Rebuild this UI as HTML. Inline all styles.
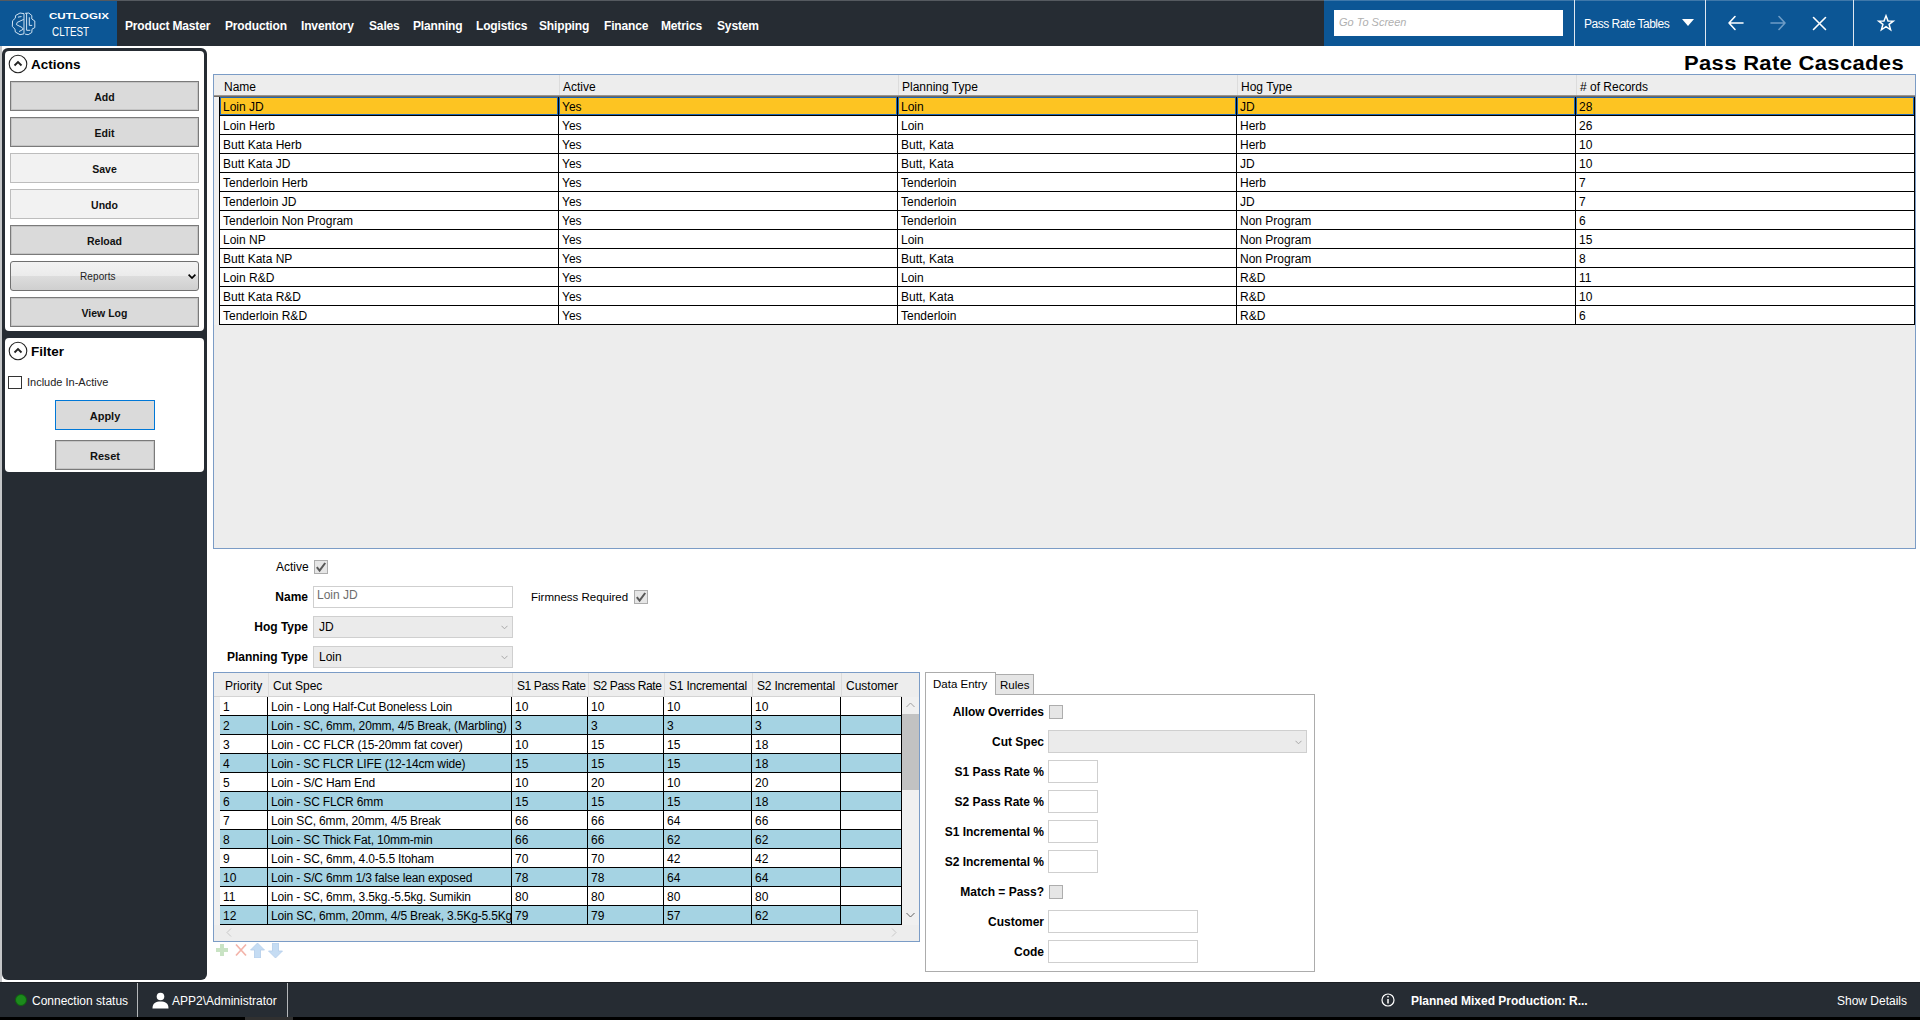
<!DOCTYPE html><html><head><meta charset='utf-8'><style>
*{box-sizing:border-box;margin:0;padding:0}
html,body{width:1920px;height:1020px;overflow:hidden;background:#fff;font-family:'Liberation Sans', sans-serif;color:#000}
.a{position:absolute}
.t{position:absolute;white-space:nowrap;line-height:1}
.nav{position:absolute;top:18px;color:#fff;font-weight:bold;font-size:12px;letter-spacing:-0.15px;white-space:nowrap;line-height:16px}
.btn{position:absolute;left:10px;width:189px;height:30px;background:#dadada;border:1px solid #7a7a7a;box-shadow:inset 0 0 0 1px #c4c4c4;font-weight:bold;font-size:10.5px;text-align:center;line-height:28px;padding-top:1px;color:#111}
.btn.dis{background:#f2f2f2;border-color:#bdbdbd;box-shadow:none}
.grid{position:absolute;border:1px solid #7b9cc6;background:#ededed;overflow:hidden}
table{border-collapse:collapse;table-layout:fixed}
td{font-size:12px;white-space:nowrap;overflow:hidden;padding:0 0 0 3px;height:19px;line-height:18px;border-right:1px solid #000;border-bottom:1px solid #000;vertical-align:top}
.hd{position:absolute;font-size:12px;white-space:nowrap;line-height:1}
.lbl{position:absolute;font-size:12px;font-weight:bold;white-space:nowrap;text-align:right;line-height:14px}
.inp{position:absolute;background:#fff;border:1px solid #cfcfcf}
.sel{position:absolute;background:#ebebeb;border:1px solid #cfcfcf;font-size:12px;line-height:20px;padding-left:5px}
.cell{position:absolute;height:19px;border-right:1px solid #000;border-bottom:1px solid #000;padding-left:3px;padding-top:1px;font-size:12px;line-height:18px;overflow:hidden;white-space:nowrap;background:#fff}
.selb{position:absolute;left:0;top:0;right:0;bottom:0;border:1px solid #1f66b3}
.cb{position:absolute;width:14px;height:14px;background:#e6e6e6;border:1px solid #adadad}
</style></head><body>
<div class='a' style='left:0;top:0;width:1920px;height:46px;background:#262c33'></div>
<div class='a' style='left:0;top:0;width:1920px;height:1px;background:#555a60'></div>
<div class='a' style='left:0;top:1px;width:117px;height:45px;background:#0c5695'></div>
<svg class='a' style='left:9px;top:10px' width='30' height='28' viewBox='0 0 30 28' fill='none' stroke='#cfe2f2' stroke-width='1' stroke-linejoin='round' stroke-linecap='round'>
<path d='M14.6 3.6 L11 3 L6.6 5.5 L6.3 8.2 L3.6 10.7 L3.3 16.5 L6 19.2 L6.3 22 L11 24.7 L14.6 23.9 Z'/>
<path d='M16.5 3.3 L19.8 3 L22.8 5.5 L22.8 9 L25.8 11 L25.8 17.6 L23 19.2 L22.8 22.5 L19.2 24.7 L16.5 24.2'/>
<path d='M17.6 3.6 L17.6 20.3 L20.9 20.3'/>
<path d='M20.3 7.7 L20.3 15.4 L22.8 15.4'/>
<path d='M14.3 9.6 L8.2 12.4 L7.4 14.6 L13.2 17.6 L14.3 19.2 L10.4 21.4'/>
<path d='M9.3 7.1 L12.1 6.6'/>
</svg>
<div class='t' style='left:49px;top:11px;color:#fff;font-weight:bold;font-size:9.5px;transform:scaleX(1.22);transform-origin:left top'>CUTLOGIX</div>
<div class='t' style='left:52px;top:26px;color:#fff;font-size:12.5px;transform:scaleX(0.79);transform-origin:left top'>CLTEST</div>
<div class='nav' style='left:125px'>Product Master</div>
<div class='nav' style='left:225px'>Production</div>
<div class='nav' style='left:301px'>Inventory</div>
<div class='nav' style='left:369px'>Sales</div>
<div class='nav' style='left:413px'>Planning</div>
<div class='nav' style='left:476px'>Logistics</div>
<div class='nav' style='left:539px'>Shipping</div>
<div class='nav' style='left:604px'>Finance</div>
<div class='nav' style='left:661px'>Metrics</div>
<div class='nav' style='left:717px'>System</div>
<div class='a' style='left:1324px;top:1px;width:596px;height:45px;background:#0c5695'></div>
<div class='a' style='left:1324px;top:0;width:596px;height:1px;background:#3f78aa'></div>
<div class='a' style='left:1334px;top:10px;width:229px;height:26px;background:#fff'></div>
<div class='t' style='left:1339px;top:17px;font-size:11px;font-style:italic;color:#b0b0b0'>Go To Screen</div>
<div class='a' style='left:1574px;top:0;width:1px;height:46px;background:#dfe7f0'></div>
<div class='a' style='left:1705px;top:0;width:1px;height:46px;background:#dfe7f0'></div>
<div class='a' style='left:1853px;top:0;width:1px;height:46px;background:#dfe7f0'></div>
<div class='t' style='left:1584px;top:18px;font-size:12px;letter-spacing:-0.5px;color:#fff'>Pass Rate Tables</div>
<svg class='a' style='left:1682px;top:19px' width='12' height='8'><path d='M0 0 L12 0 L6 7Z' fill='#fff'/></svg>
<svg class='a' style='left:1726px;top:13px' width='20' height='20' viewBox='0 0 20 20' fill='none' stroke='#fff' stroke-width='1.6' stroke-linecap='round'>
<path d='M3 10 L17 10 M3 10 L9 3.5 M3 10 L9 16.5'/></svg>
<svg class='a' style='left:1768px;top:13px' width='20' height='20' viewBox='0 0 20 20' fill='none' stroke='#6e9cc6' stroke-width='1.6' stroke-linecap='round'>
<path d='M3 10 L17 10 M17 10 L11 3.5 M17 10 L11 16.5'/></svg>
<svg class='a' style='left:1810px;top:14px' width='20' height='20' viewBox='0 0 20 20' fill='none' stroke='#fff' stroke-width='1.6' stroke-linecap='round'>
<path d='M3.5 3.5 L15.5 15.5 M15.5 3.5 L3.5 15.5'/></svg>
<svg class='a' style='left:1876px;top:13px' width='20' height='20' viewBox='0 0 20 20' fill='none' stroke='#fff' stroke-width='1.5' stroke-linejoin='miter'>
<path d='M10 2.8 L12 7.9 L17.3 8.1 L13.1 11.4 L14.6 16.8 L10 13.7 L5.4 16.8 L6.9 11.4 L2.7 8.1 L8 7.9Z'/></svg>
<div class='t' style='left:1684px;top:53px;font-size:20px;font-weight:bold;letter-spacing:0.3px;transform:scaleX(1.1);transform-origin:left top'>Pass Rate Cascades</div>
<div class='a' style='left:0;top:46px;width:2px;height:936px;background:#c4c6c8'></div>
<div class='a' style='left:2px;top:48px;width:205px;height:932px;background:#262c33;border-radius:6px'></div>
<div class='a' style='left:5px;top:51px;width:199px;height:280px;background:#fff;border-radius:4px'></div>
<div class='a' style='left:5px;top:338px;width:199px;height:134px;background:#fff;border-radius:4px'></div>
<svg class='a' style='left:8px;top:54px' width='20' height='20' viewBox='0 0 20 20' fill='none' stroke='#222'>
<circle cx='10' cy='10' r='8.8' stroke-width='1.1'/><path d='M6.5 11.5 L10 8 L13.5 11.5' stroke-width='1.8'/></svg>
<div class='t' style='left:31px;top:58px;font-size:13.5px;font-weight:bold'>Actions</div>
<div class='btn' style='top:81px'>Add</div>
<div class='btn' style='top:117px'>Edit</div>
<div class='btn dis' style='top:153px'>Save</div>
<div class='btn dis' style='top:189px'>Undo</div>
<div class='btn' style='top:225px'>Reload</div>
<div class='a' style='left:10px;top:261px;width:189px;height:30px;border:1px solid #707070;border-radius:3px;background:linear-gradient(#f3f3f3 0%,#ebebeb 50%,#dddddd 50%,#cfcfcf 100%)'></div>
<div class='t' style='left:80px;top:272px;font-size:10px;letter-spacing:0.1px;color:#222'>Reports</div>
<svg class='a' style='left:188px;top:274px' width='8' height='5'><path d='M0.6 0.6 L4 4 L7.4 0.6' fill='none' stroke='#000' stroke-width='1.7'/></svg>
<div class='btn' style='top:297px'>View Log</div>
<svg class='a' style='left:8px;top:341px' width='20' height='20' viewBox='0 0 20 20' fill='none' stroke='#222'>
<circle cx='10' cy='10' r='8.8' stroke-width='1.1'/><path d='M6.5 11.5 L10 8 L13.5 11.5' stroke-width='1.8'/></svg>
<div class='t' style='left:31px;top:345px;font-size:13.5px;font-weight:bold'>Filter</div>
<div class='a' style='left:8px;top:376px;width:14px;height:13px;border:1px solid #333;background:#fff'></div>
<div class='t' style='left:27px;top:377px;font-size:11px;color:#222'>Include In-Active</div>
<div class='btn' style='left:55px;top:400px;width:100px;height:30px;border:1px solid #0078d7;box-shadow:none;font-size:11px'>Apply</div>
<div class='btn' style='left:55px;top:440px;width:100px;height:30px;font-size:11px'>Reset</div>
<div class='grid' style='left:213px;top:74px;width:1703px;height:475px'></div>
<div class='a' style='left:214px;top:75px;width:1701px;height:20px;background:#ededed'></div>
<div class='a' style='left:214px;top:95px;width:1701px;height:1px;background:#9b9690'></div>
<div class='a' style='left:214px;top:96px;width:1701px;height:1px;background:#6f6a66'></div>
<div class='hd' style='left:224px;top:81px'>Name</div>
<div class='hd' style='left:563px;top:81px'>Active</div>
<div class='a' style='left:559px;top:75px;width:1px;height:20px;background:#dcdcdc'></div>
<div class='hd' style='left:902px;top:81px'>Planning Type</div>
<div class='a' style='left:898px;top:75px;width:1px;height:20px;background:#dcdcdc'></div>
<div class='hd' style='left:1241px;top:81px'>Hog Type</div>
<div class='a' style='left:1237px;top:75px;width:1px;height:20px;background:#dcdcdc'></div>
<div class='hd' style='left:1580px;top:81px'># of Records</div>
<div class='a' style='left:1576px;top:75px;width:1px;height:20px;background:#dcdcdc'></div>
<div class='a' style='left:214px;top:97px;width:5px;height:228px;background:#f0f0f0'></div>
<div class='cell' style='left:219px;top:97px;width:340px;border-left:1px solid #000;background:#fdc422'><div class='selb'></div>Loin JD</div>
<div class='cell' style='left:559px;top:97px;width:339px;background:#fdc422'><div class='selb'></div>Yes</div>
<div class='cell' style='left:898px;top:97px;width:339px;background:#fdc422'><div class='selb'></div>Loin</div>
<div class='cell' style='left:1237px;top:97px;width:339px;background:#fdc422'><div class='selb'></div>JD</div>
<div class='cell' style='left:1576px;top:97px;width:339px;background:#fdc422'><div class='selb'></div>28</div>
<div class='cell' style='left:219px;top:116px;width:340px;border-left:1px solid #000;'>Loin Herb</div>
<div class='cell' style='left:559px;top:116px;width:339px;'>Yes</div>
<div class='cell' style='left:898px;top:116px;width:339px;'>Loin</div>
<div class='cell' style='left:1237px;top:116px;width:339px;'>Herb</div>
<div class='cell' style='left:1576px;top:116px;width:339px;'>26</div>
<div class='cell' style='left:219px;top:135px;width:340px;border-left:1px solid #000;'>Butt Kata Herb</div>
<div class='cell' style='left:559px;top:135px;width:339px;'>Yes</div>
<div class='cell' style='left:898px;top:135px;width:339px;'>Butt, Kata</div>
<div class='cell' style='left:1237px;top:135px;width:339px;'>Herb</div>
<div class='cell' style='left:1576px;top:135px;width:339px;'>10</div>
<div class='cell' style='left:219px;top:154px;width:340px;border-left:1px solid #000;'>Butt Kata JD</div>
<div class='cell' style='left:559px;top:154px;width:339px;'>Yes</div>
<div class='cell' style='left:898px;top:154px;width:339px;'>Butt, Kata</div>
<div class='cell' style='left:1237px;top:154px;width:339px;'>JD</div>
<div class='cell' style='left:1576px;top:154px;width:339px;'>10</div>
<div class='cell' style='left:219px;top:173px;width:340px;border-left:1px solid #000;'>Tenderloin Herb</div>
<div class='cell' style='left:559px;top:173px;width:339px;'>Yes</div>
<div class='cell' style='left:898px;top:173px;width:339px;'>Tenderloin</div>
<div class='cell' style='left:1237px;top:173px;width:339px;'>Herb</div>
<div class='cell' style='left:1576px;top:173px;width:339px;'>7</div>
<div class='cell' style='left:219px;top:192px;width:340px;border-left:1px solid #000;'>Tenderloin JD</div>
<div class='cell' style='left:559px;top:192px;width:339px;'>Yes</div>
<div class='cell' style='left:898px;top:192px;width:339px;'>Tenderloin</div>
<div class='cell' style='left:1237px;top:192px;width:339px;'>JD</div>
<div class='cell' style='left:1576px;top:192px;width:339px;'>7</div>
<div class='cell' style='left:219px;top:211px;width:340px;border-left:1px solid #000;'>Tenderloin Non Program</div>
<div class='cell' style='left:559px;top:211px;width:339px;'>Yes</div>
<div class='cell' style='left:898px;top:211px;width:339px;'>Tenderloin</div>
<div class='cell' style='left:1237px;top:211px;width:339px;'>Non Program</div>
<div class='cell' style='left:1576px;top:211px;width:339px;'>6</div>
<div class='cell' style='left:219px;top:230px;width:340px;border-left:1px solid #000;'>Loin NP</div>
<div class='cell' style='left:559px;top:230px;width:339px;'>Yes</div>
<div class='cell' style='left:898px;top:230px;width:339px;'>Loin</div>
<div class='cell' style='left:1237px;top:230px;width:339px;'>Non Program</div>
<div class='cell' style='left:1576px;top:230px;width:339px;'>15</div>
<div class='cell' style='left:219px;top:249px;width:340px;border-left:1px solid #000;'>Butt Kata NP</div>
<div class='cell' style='left:559px;top:249px;width:339px;'>Yes</div>
<div class='cell' style='left:898px;top:249px;width:339px;'>Butt, Kata</div>
<div class='cell' style='left:1237px;top:249px;width:339px;'>Non Program</div>
<div class='cell' style='left:1576px;top:249px;width:339px;'>8</div>
<div class='cell' style='left:219px;top:268px;width:340px;border-left:1px solid #000;'>Loin R&amp;D</div>
<div class='cell' style='left:559px;top:268px;width:339px;'>Yes</div>
<div class='cell' style='left:898px;top:268px;width:339px;'>Loin</div>
<div class='cell' style='left:1237px;top:268px;width:339px;'>R&amp;D</div>
<div class='cell' style='left:1576px;top:268px;width:339px;'>11</div>
<div class='cell' style='left:219px;top:287px;width:340px;border-left:1px solid #000;'>Butt Kata R&amp;D</div>
<div class='cell' style='left:559px;top:287px;width:339px;'>Yes</div>
<div class='cell' style='left:898px;top:287px;width:339px;'>Butt, Kata</div>
<div class='cell' style='left:1237px;top:287px;width:339px;'>R&amp;D</div>
<div class='cell' style='left:1576px;top:287px;width:339px;'>10</div>
<div class='cell' style='left:219px;top:306px;width:340px;border-left:1px solid #000;'>Tenderloin R&amp;D</div>
<div class='cell' style='left:559px;top:306px;width:339px;'>Yes</div>
<div class='cell' style='left:898px;top:306px;width:339px;'>Tenderloin</div>
<div class='cell' style='left:1237px;top:306px;width:339px;'>R&amp;D</div>
<div class='cell' style='left:1576px;top:306px;width:339px;'>6</div>
<div class='t' style='left:276px;top:561px;font-size:12px'>Active</div>
<div class='cb' style='left:314px;top:560px;width:14px;height:14px'></div><svg class='a' style='left:314px;top:560px' width='14' height='14' viewBox='0 0 14 14'><path d='M2.8 7.2 L5.6 10.6 L11.2 3' fill='none' stroke='#585858' stroke-width='2'/></svg>
<div class='lbl' style='left:200px;width:108px;top:590px'>Name</div>
<div class='inp' style='left:313px;top:586px;width:200px;height:22px'></div>
<div class='t' style='left:317px;top:589px;font-size:12px;color:#6d6d6d'>Loin JD</div>
<div class='t' style='left:531px;top:592px;font-size:11.5px'>Firmness Required</div>
<div class='cb' style='left:634px;top:590px;width:14px;height:14px'></div><svg class='a' style='left:634px;top:590px' width='14' height='14' viewBox='0 0 14 14'><path d='M2.8 7.2 L5.6 10.6 L11.2 3' fill='none' stroke='#585858' stroke-width='2'/></svg>
<div class='lbl' style='left:200px;width:108px;top:620px'>Hog Type</div>
<div class='sel' style='left:313px;top:616px;width:200px;height:22px'>JD</div>
<div class='lbl' style='left:200px;width:108px;top:650px'>Planning Type</div>
<div class='sel' style='left:313px;top:646px;width:200px;height:22px'>Loin</div>
<svg class='a' style='left:501px;top:625px' width='7' height='5'><path d='M0.5 0.8 L3.5 3.8 L6.5 0.8' fill='none' stroke='#a8a8a8' stroke-width='1'/></svg>
<svg class='a' style='left:501px;top:655px' width='7' height='5'><path d='M0.5 0.8 L3.5 3.8 L6.5 0.8' fill='none' stroke='#a8a8a8' stroke-width='1'/></svg>
<div class='grid' style='left:213px;top:672px;width:707px;height:270px'></div>
<div class='a' style='left:214px;top:673px;width:705px;height:23px;background:#ededed'></div>
<div class='a' style='left:214px;top:696px;width:688px;height:1px;background:#d4d4d4'></div>
<div class='hd' style='left:225px;top:680px;letter-spacing:0px'>Priority</div>
<div class='hd' style='left:273px;top:680px;letter-spacing:0px'>Cut Spec</div>
<div class='a' style='left:268px;top:673px;width:1px;height:23px;background:#dcdcdc'></div>
<div class='hd' style='left:517px;top:680px;letter-spacing:-0.4px'>S1 Pass Rate</div>
<div class='a' style='left:512px;top:673px;width:1px;height:23px;background:#dcdcdc'></div>
<div class='hd' style='left:593px;top:680px;letter-spacing:-0.4px'>S2 Pass Rate</div>
<div class='a' style='left:588px;top:673px;width:1px;height:23px;background:#dcdcdc'></div>
<div class='hd' style='left:669px;top:680px;letter-spacing:-0.2px'>S1 Incremental</div>
<div class='a' style='left:664px;top:673px;width:1px;height:23px;background:#dcdcdc'></div>
<div class='hd' style='left:757px;top:680px;letter-spacing:-0.2px'>S2 Incremental</div>
<div class='a' style='left:752px;top:673px;width:1px;height:23px;background:#dcdcdc'></div>
<div class='hd' style='left:846px;top:680px;letter-spacing:0px'>Customer</div>
<div class='a' style='left:841px;top:673px;width:1px;height:23px;background:#dcdcdc'></div>
<div class='a' style='left:214px;top:697px;width:6px;height:228px;background:#f0f0f0'></div>
<div class='cell' style='left:220px;top:697px;width:48px;background:#fff;'>1</div>
<div class='cell' style='left:268px;top:697px;width:244px;background:#fff;letter-spacing:-0.15px;'>Loin - Long Half-Cut Boneless Loin</div>
<div class='cell' style='left:512px;top:697px;width:76px;background:#fff;'>10</div>
<div class='cell' style='left:588px;top:697px;width:76px;background:#fff;'>10</div>
<div class='cell' style='left:664px;top:697px;width:88px;background:#fff;'>10</div>
<div class='cell' style='left:752px;top:697px;width:89px;background:#fff;'>10</div>
<div class='cell' style='left:841px;top:697px;width:61px;background:#fff;'></div>
<div class='cell' style='left:220px;top:716px;width:48px;background:#a5d3e3;'>2</div>
<div class='cell' style='left:268px;top:716px;width:244px;background:#a5d3e3;letter-spacing:-0.15px;'>Loin - SC, 6mm, 20mm, 4/5 Break, (Marbling)</div>
<div class='cell' style='left:512px;top:716px;width:76px;background:#a5d3e3;'>3</div>
<div class='cell' style='left:588px;top:716px;width:76px;background:#a5d3e3;'>3</div>
<div class='cell' style='left:664px;top:716px;width:88px;background:#a5d3e3;'>3</div>
<div class='cell' style='left:752px;top:716px;width:89px;background:#a5d3e3;'>3</div>
<div class='cell' style='left:841px;top:716px;width:61px;background:#a5d3e3;'></div>
<div class='cell' style='left:220px;top:735px;width:48px;background:#fff;'>3</div>
<div class='cell' style='left:268px;top:735px;width:244px;background:#fff;letter-spacing:-0.15px;'>Loin - CC FLCR (15-20mm fat cover)</div>
<div class='cell' style='left:512px;top:735px;width:76px;background:#fff;'>10</div>
<div class='cell' style='left:588px;top:735px;width:76px;background:#fff;'>15</div>
<div class='cell' style='left:664px;top:735px;width:88px;background:#fff;'>15</div>
<div class='cell' style='left:752px;top:735px;width:89px;background:#fff;'>18</div>
<div class='cell' style='left:841px;top:735px;width:61px;background:#fff;'></div>
<div class='cell' style='left:220px;top:754px;width:48px;background:#a5d3e3;'>4</div>
<div class='cell' style='left:268px;top:754px;width:244px;background:#a5d3e3;letter-spacing:-0.15px;'>Loin - SC FLCR LIFE (12-14cm wide)</div>
<div class='cell' style='left:512px;top:754px;width:76px;background:#a5d3e3;'>15</div>
<div class='cell' style='left:588px;top:754px;width:76px;background:#a5d3e3;'>15</div>
<div class='cell' style='left:664px;top:754px;width:88px;background:#a5d3e3;'>15</div>
<div class='cell' style='left:752px;top:754px;width:89px;background:#a5d3e3;'>18</div>
<div class='cell' style='left:841px;top:754px;width:61px;background:#a5d3e3;'></div>
<div class='cell' style='left:220px;top:773px;width:48px;background:#fff;'>5</div>
<div class='cell' style='left:268px;top:773px;width:244px;background:#fff;letter-spacing:-0.15px;'>Loin - S/C Ham End</div>
<div class='cell' style='left:512px;top:773px;width:76px;background:#fff;'>10</div>
<div class='cell' style='left:588px;top:773px;width:76px;background:#fff;'>20</div>
<div class='cell' style='left:664px;top:773px;width:88px;background:#fff;'>10</div>
<div class='cell' style='left:752px;top:773px;width:89px;background:#fff;'>20</div>
<div class='cell' style='left:841px;top:773px;width:61px;background:#fff;'></div>
<div class='cell' style='left:220px;top:792px;width:48px;background:#a5d3e3;'>6</div>
<div class='cell' style='left:268px;top:792px;width:244px;background:#a5d3e3;letter-spacing:-0.15px;'>Loin - SC FLCR 6mm</div>
<div class='cell' style='left:512px;top:792px;width:76px;background:#a5d3e3;'>15</div>
<div class='cell' style='left:588px;top:792px;width:76px;background:#a5d3e3;'>15</div>
<div class='cell' style='left:664px;top:792px;width:88px;background:#a5d3e3;'>15</div>
<div class='cell' style='left:752px;top:792px;width:89px;background:#a5d3e3;'>18</div>
<div class='cell' style='left:841px;top:792px;width:61px;background:#a5d3e3;'></div>
<div class='cell' style='left:220px;top:811px;width:48px;background:#fff;'>7</div>
<div class='cell' style='left:268px;top:811px;width:244px;background:#fff;letter-spacing:-0.15px;'>Loin SC, 6mm, 20mm, 4/5 Break</div>
<div class='cell' style='left:512px;top:811px;width:76px;background:#fff;'>66</div>
<div class='cell' style='left:588px;top:811px;width:76px;background:#fff;'>66</div>
<div class='cell' style='left:664px;top:811px;width:88px;background:#fff;'>64</div>
<div class='cell' style='left:752px;top:811px;width:89px;background:#fff;'>66</div>
<div class='cell' style='left:841px;top:811px;width:61px;background:#fff;'></div>
<div class='cell' style='left:220px;top:830px;width:48px;background:#a5d3e3;'>8</div>
<div class='cell' style='left:268px;top:830px;width:244px;background:#a5d3e3;letter-spacing:-0.15px;'>Loin - SC Thick Fat, 10mm-min</div>
<div class='cell' style='left:512px;top:830px;width:76px;background:#a5d3e3;'>66</div>
<div class='cell' style='left:588px;top:830px;width:76px;background:#a5d3e3;'>66</div>
<div class='cell' style='left:664px;top:830px;width:88px;background:#a5d3e3;'>62</div>
<div class='cell' style='left:752px;top:830px;width:89px;background:#a5d3e3;'>62</div>
<div class='cell' style='left:841px;top:830px;width:61px;background:#a5d3e3;'></div>
<div class='cell' style='left:220px;top:849px;width:48px;background:#fff;'>9</div>
<div class='cell' style='left:268px;top:849px;width:244px;background:#fff;letter-spacing:-0.15px;'>Loin - SC, 6mm, 4.0-5.5 Itoham</div>
<div class='cell' style='left:512px;top:849px;width:76px;background:#fff;'>70</div>
<div class='cell' style='left:588px;top:849px;width:76px;background:#fff;'>70</div>
<div class='cell' style='left:664px;top:849px;width:88px;background:#fff;'>42</div>
<div class='cell' style='left:752px;top:849px;width:89px;background:#fff;'>42</div>
<div class='cell' style='left:841px;top:849px;width:61px;background:#fff;'></div>
<div class='cell' style='left:220px;top:868px;width:48px;background:#a5d3e3;'>10</div>
<div class='cell' style='left:268px;top:868px;width:244px;background:#a5d3e3;letter-spacing:-0.15px;'>Loin - S/C 6mm 1/3 false lean exposed</div>
<div class='cell' style='left:512px;top:868px;width:76px;background:#a5d3e3;'>78</div>
<div class='cell' style='left:588px;top:868px;width:76px;background:#a5d3e3;'>78</div>
<div class='cell' style='left:664px;top:868px;width:88px;background:#a5d3e3;'>64</div>
<div class='cell' style='left:752px;top:868px;width:89px;background:#a5d3e3;'>64</div>
<div class='cell' style='left:841px;top:868px;width:61px;background:#a5d3e3;'></div>
<div class='cell' style='left:220px;top:887px;width:48px;background:#fff;'>11</div>
<div class='cell' style='left:268px;top:887px;width:244px;background:#fff;letter-spacing:-0.15px;'>Loin - SC, 6mm, 3.5kg.-5.5kg. Sumikin</div>
<div class='cell' style='left:512px;top:887px;width:76px;background:#fff;'>80</div>
<div class='cell' style='left:588px;top:887px;width:76px;background:#fff;'>80</div>
<div class='cell' style='left:664px;top:887px;width:88px;background:#fff;'>80</div>
<div class='cell' style='left:752px;top:887px;width:89px;background:#fff;'>80</div>
<div class='cell' style='left:841px;top:887px;width:61px;background:#fff;'></div>
<div class='cell' style='left:220px;top:906px;width:48px;background:#a5d3e3;'>12</div>
<div class='cell' style='left:268px;top:906px;width:244px;background:#a5d3e3;letter-spacing:-0.15px;'>Loin SC, 6mm, 20mm, 4/5 Break, 3.5Kg-5.5Kg</div>
<div class='cell' style='left:512px;top:906px;width:76px;background:#a5d3e3;'>79</div>
<div class='cell' style='left:588px;top:906px;width:76px;background:#a5d3e3;'>79</div>
<div class='cell' style='left:664px;top:906px;width:88px;background:#a5d3e3;'>57</div>
<div class='cell' style='left:752px;top:906px;width:89px;background:#a5d3e3;'>62</div>
<div class='cell' style='left:841px;top:906px;width:61px;background:#a5d3e3;'></div>
<div class='a' style='left:902px;top:697px;width:17px;height:228px;background:#f0f0f0'></div>
<div class='a' style='left:902px;top:714px;width:17px;height:76px;background:#c2c2c2'></div>
<svg class='a' style='left:906px;top:702px' width='9' height='6'><path d='M0.5 5 L4.5 1 L8.5 5' fill='none' stroke='#a0a0a0' stroke-width='1'/></svg>
<svg class='a' style='left:906px;top:912px' width='9' height='6'><path d='M0.5 1 L4.5 5 L8.5 1' fill='none' stroke='#606060' stroke-width='1'/></svg>
<div class='a' style='left:214px;top:925px;width:705px;height:16px;background:#ededed'></div>
<svg class='a' style='left:226px;top:928px' width='6' height='9'><path d='M5 0.5 L1 4.5 L5 8.5' fill='none' stroke='#c8c8c8' stroke-width='1'/></svg>
<svg class='a' style='left:891px;top:928px' width='6' height='9'><path d='M1 0.5 L5 4.5 L1 8.5' fill='none' stroke='#c8c8c8' stroke-width='1'/></svg>
<svg class='a' style='left:215px;top:943px' width='70' height='15' viewBox='0 0 70 15'>
<path d='M5 1 H9 V5 H13 V9 H9 V13 H5 V9 H1 V5 H5Z' fill='#c9e3c4'/>
<path d='M21 1.5 L31 12.5 M31 1.5 L21 12.5' stroke='#f3b4aa' stroke-width='1.7'/>
<path d='M42.5 0 L49.5 7 H45.5 V15 H39.5 V7 H35.5Z' fill='#c5dcf3' stroke='#b4cdea' stroke-width='0.8'/>
<path d='M60.5 15 L67.5 8 H63.5 V0 H57.5 V8 H53.5Z' fill='#c5dcf3' stroke='#b4cdea' stroke-width='0.8'/>
</svg>
<div class='a' style='left:925px;top:694px;width:390px;height:278px;border:1px solid #acacac;background:#fff'></div>
<div class='a' style='left:995px;top:674px;width:39px;height:21px;border:1px solid #acacac;background:#e5e5e5'></div>
<div class='a' style='left:925px;top:672px;width:71px;height:23px;border:1px solid #acacac;border-bottom:none;background:#fff'></div>
<div class='t' style='left:933px;top:679px;font-size:11.5px'>Data Entry</div>
<div class='t' style='left:1000px;top:680px;font-size:11.5px'>Rules</div>
<div class='lbl' style='left:900px;width:144px;top:705px'>Allow Overrides</div>
<div class='cb' style='left:1049px;top:705px'></div>
<div class='lbl' style='left:900px;width:144px;top:735px'>Cut Spec</div>
<div class='sel' style='left:1048px;top:730px;width:259px;height:23px'></div>
<svg class='a' style='left:1295px;top:740px' width='7' height='5'><path d='M0.5 0.8 L3.5 3.8 L6.5 0.8' fill='none' stroke='#a8a8a8' stroke-width='1'/></svg>
<div class='lbl' style='left:900px;width:144px;top:765px'>S1 Pass Rate %</div>
<div class='inp' style='left:1048px;top:760px;width:50px;height:23px'></div>
<div class='lbl' style='left:900px;width:144px;top:795px'>S2 Pass Rate %</div>
<div class='inp' style='left:1048px;top:790px;width:50px;height:23px'></div>
<div class='lbl' style='left:900px;width:144px;top:825px'>S1 Incremental %</div>
<div class='inp' style='left:1048px;top:820px;width:50px;height:23px'></div>
<div class='lbl' style='left:900px;width:144px;top:855px'>S2 Incremental %</div>
<div class='inp' style='left:1048px;top:850px;width:50px;height:23px'></div>
<div class='lbl' style='left:900px;width:144px;top:885px'>Match = Pass?</div>
<div class='cb' style='left:1049px;top:885px'></div>
<div class='lbl' style='left:900px;width:144px;top:915px'>Customer</div>
<div class='inp' style='left:1048px;top:910px;width:150px;height:23px'></div>
<div class='lbl' style='left:900px;width:144px;top:945px'>Code</div>
<div class='inp' style='left:1048px;top:940px;width:150px;height:23px'></div>
<div class='a' style='left:0;top:982px;width:1920px;height:35px;background:#262c33;border-top:1px solid #1b1f24'></div>
<div class='a' style='left:0;top:1017px;width:1920px;height:3px;background:#000'></div>
<div class='a' style='left:245px;top:1017px;width:48px;height:3px;background:#303030'></div>
<div class='a' style='left:137px;top:983px;width:1px;height:34px;background:#b4b7ba'></div>
<div class='a' style='left:287px;top:983px;width:1px;height:34px;background:#b4b7ba'></div>
<div class='a' style='left:15px;top:994px;width:12px;height:12px;border-radius:50%;background:#1c8a1c;border:1px solid #0f5f0f'></div>
<div class='t' style='left:32px;top:995px;font-size:12px;color:#fff'>Connection status</div>
<svg class='a' style='left:152px;top:992px' width='17' height='17' viewBox='0 0 17 17' fill='#fff'>
<circle cx='8.5' cy='4.5' r='3.8'/><path d='M0.5 16.5 C0.5 11 4 9.5 8.5 9.5 C13 9.5 16.5 11 16.5 16.5Z'/></svg>
<div class='t' style='left:172px;top:995px;font-size:12px;color:#fff'>APP2\Administrator</div>
<svg class='a' style='left:1381px;top:993px' width='14' height='14' viewBox='0 0 14 14' fill='none' stroke='#fff'>
<circle cx='7' cy='7' r='6' stroke-width='1.2'/><path d='M7 6 V10.5' stroke-width='1.5'/><circle cx='7' cy='3.8' r='0.5' fill='#fff' stroke-width='0.8'/></svg>
<div class='t' style='left:1411px;top:995px;font-size:12px;font-weight:bold;color:#fff'>Planned Mixed Production: R...</div>
<div class='t' style='left:1837px;top:995px;font-size:12px;color:#fff'>Show Details</div>
</body></html>
